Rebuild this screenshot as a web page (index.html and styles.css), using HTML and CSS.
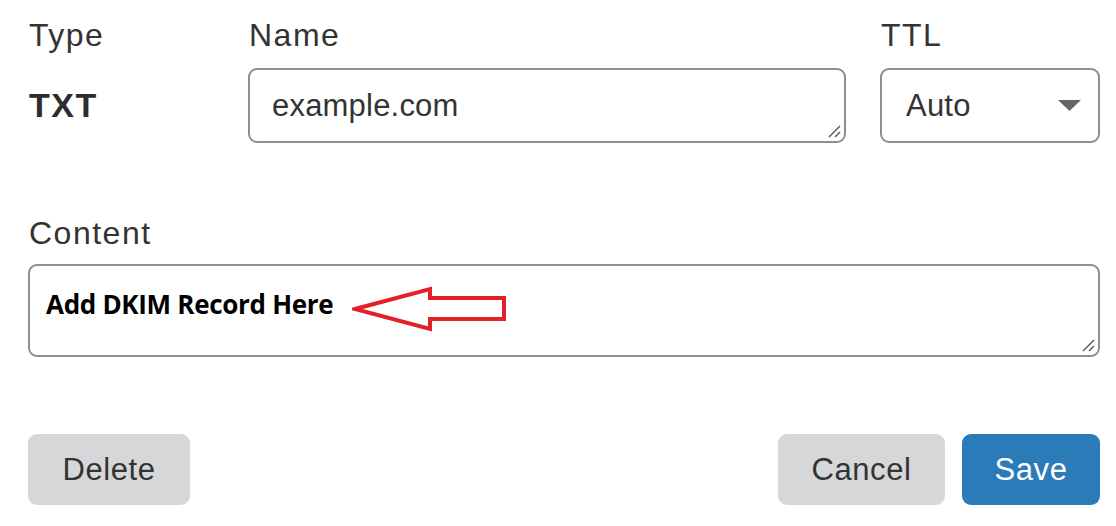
FILE: index.html
```html
<!DOCTYPE html>
<html lang="en">
<head>
  <meta charset="UTF-8" />
  <title>Edit record</title>
  <link rel="stylesheet" href="styles.css">
</head>
<body>
  <form class="record-form">
    <div class="record-row">
      <div class="field field-type">
        <label class="field-label">Type</label>
        <div class="type-value">TXT</div>
      </div>
      <div class="field field-name">
        <label class="field-label" for="name">Name</label>
        <div class="box name-box">
          <span class="box-text">example.com</span>
          <svg class="grip" width="14" height="14" viewBox="0 0 14 14"><path d="M13 2 L2 13 M13 8 L8 13" stroke="#555" stroke-width="1.4" fill="none"/></svg>
        </div>
      </div>
      <div class="field field-ttl">
        <label class="field-label" for="ttl">TTL</label>
        <div class="box select-box">
          <span class="box-text">Auto</span>
          <svg class="caret" width="23" height="12" viewBox="0 0 23 12"><path d="M0 0 H23 L11.5 11 Z" fill="#666"/></svg>
        </div>
      </div>
    </div>

    <div class="content-field">
      <label class="field-label" for="content">Content</label>
      <div class="box content-box">
        <span class="note">Add DKIM Record Here</span>
        <svg class="grip" width="14" height="14" viewBox="0 0 14 14"><path d="M13 2 L2 13 M13 8 L8 13" stroke="#555" stroke-width="1.4" fill="none"/></svg>
        <!-- annotation arrow -->
        <svg class="arrow" width="180" height="46" viewBox="0 0 180 46"><polygon points="3,23 78,3 78,12 152,12 152,33 78,33 78,43" fill="none" stroke="#e3202a" stroke-width="4" stroke-linejoin="miter"/></svg>
      </div>
    </div>

    <div class="actions">
      <button type="button" class="btn btn-grey btn-delete">Delete</button>
      <div class="actions-right">
        <button type="button" class="btn btn-grey btn-cancel">Cancel</button>
        <button type="submit" class="btn btn-blue">Save</button>
      </div>
    </div>
  </form>
</body>
</html>
```

FILE: styles.css
```css
body { margin: 0; background: #fff; font-family: "Liberation Sans", Arial, sans-serif; color: #333; }
.record-form { width: 1072px; padding: 17px 0 0 28px; }

.record-row { display: flex; }
.field-type { width: 220px; }
.field-name { width: 598px; }
.field-ttl { width: 220px; margin-left: auto; }
.field-label { display: block; font-size: 32px; letter-spacing: 1.5px; line-height: 36px; color: #333; margin-bottom: 15px; padding-left: 1px; }
.type-value { font-size: 34px; font-weight: bold; letter-spacing: 1.5px; padding-left: 1px; line-height: 75px; margin-top: 2px; color: #2d2d2d; }

.box {
  position: relative; border: 2px solid #8e8e8e; border-radius: 9px; background: #fff;
  box-sizing: border-box;
}
.name-box, .select-box { height: 75px; display: flex; align-items: center; padding-left: 22px; }
.select-box { padding-left: 24px; }
.box-text { font-size: 31px; letter-spacing: 0.2px; color: #333; }
.grip { position: absolute; right: 3px; bottom: 3px; }
.caret { position: absolute; right: 17px; top: 30px; }

.content-field { margin-top: 72px; }
.content-field .field-label { margin-bottom: 13px; }
.content-box { height: 93px; padding: 20px 16px; }
.note { font-family: "Open Sans", "Liberation Sans", sans-serif; font-weight: bold; font-size: 26px; color: #000; letter-spacing: -0.3px; }
.arrow { position: absolute; left: 322px; top: 20px; }

.actions { display: flex; justify-content: space-between; margin-top: 77px; }
.actions-right { display: flex; gap: 17px; }
.btn {
  height: 71px; border: none; border-radius: 9px; font-family: inherit; font-size: 31px;
  letter-spacing: 0.6px; padding: 0; cursor: pointer;
}
.btn-grey { background: #d6d7d9; color: #333; }
.btn-blue { background: #2b7bb9; color: #fff; width: 138px; }
.btn-delete { width: 162px; }
.btn-cancel { width: 167px; }
```
